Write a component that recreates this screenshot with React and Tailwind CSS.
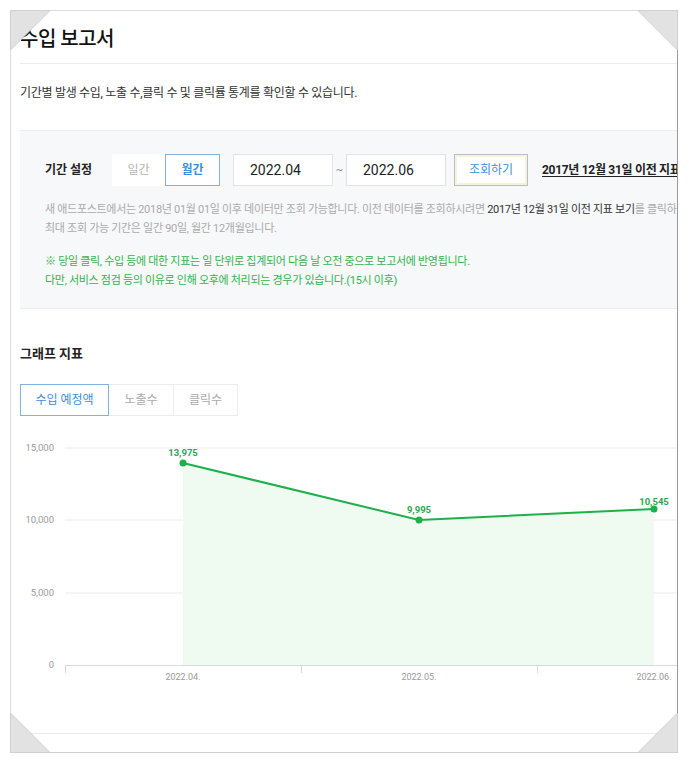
import React from "react";

const FONT = { fontFamily: "Roboto, 'Noto Sans CJK KR', sans-serif" };

function Corner({ className, points }) {
  return (
    <svg className={`absolute w-[41px] h-[41px] ${className}`} viewBox="0 0 41 41">
      <polygon points={points} fill="#e2e2e2" stroke="#cfcfcf" strokeWidth="1" />
    </svg>
  );
}

function Chart() {
  const pts = [
    { x: 163, y: 33, v: "13,975", ly: 26 },
    { x: 399, y: 90, v: "9,995", ly: 83 },
    { x: 634, y: 79, v: "10,545", ly: 75 },
  ];
  const grid = [
    { y: 18, t: "15,000" },
    { y: 90, t: "10,000" },
    { y: 163, t: "5,000" },
  ];
  const line = pts.map((p) => `${p.x},${p.y}`).join(" ");
  return (
    <svg width="680" height="260" className="block" style={FONT}>
      {grid.map((g) => (
        <g key={g.t}>
          <line x1="45" x2="680" y1={g.y} y2={g.y} stroke="#ececec" />
          <text x="34" y={g.y + 3} textAnchor="end" fontSize="9.5" fill="#9a9a9a">
            {g.t}
          </text>
        </g>
      ))}
      <text x="34" y="238" textAnchor="end" fontSize="9.5" fill="#9a9a9a">0</text>
      <polygon points={`${line} 634,235 163,235`} fill="#effaf0" />
      <line x1="45" x2="680" y1="235.5" y2="235.5" stroke="#d5dbe3" />
      {[45, 281, 517].map((x) => (
        <line key={x} x1={x + 0.5} x2={x + 0.5} y1="235" y2="243" stroke="#d5dbe3" />
      ))}
      <polyline points={line} fill="none" stroke="#1eb04a" strokeWidth="2" />
      {pts.map((p) => (
        <g key={p.v}>
          <circle cx={p.x} cy={p.y} r="3.5" fill="#1eb04a" />
          <text x={p.x} y={p.ly} textAnchor="middle" fontSize="9.5" fontWeight="700" fill="#2aa84f">
            {p.v}
          </text>
        </g>
      ))}
      {[
        { x: 163, t: "2022.04." },
        { x: 399, t: "2022.05." },
        { x: 634, t: "2022.06." },
      ].map((l) => (
        <text key={l.t} x={l.x} y="250" textAnchor="middle" fontSize="9" fill="#9a9a9a">
          {l.t}
        </text>
      ))}
    </svg>
  );
}

export default function App() {
  return (
    <div className="relative w-[689px] h-[765px] bg-white" style={FONT}>
      <div className="absolute left-[10px] top-[10px] w-[668px] h-[743px] border border-[#dcdcdc] border-r-[#9a9a9a] border-b-[#cfcfcf] overflow-hidden pl-[9px]">
        <div className="w-[900px]">
          <h1 className="pt-[14px] text-[20px] leading-[28px] font-medium text-[#111] tracking-[-0.5px]">
            수입 보고서
          </h1>
          <div className="mt-[10px] border-b border-[#ececec]" />
          <p className="mt-[20px] text-[12px] leading-[18px] text-[#333] tracking-[-0.3px]">
            기간별 발생 수입, 노출 수,클릭 수 및 클릭률 통계를 확인할 수 있습니다.
          </p>
          <div className="mt-[28px] border-t border-b border-[#ebedf0] bg-[#f7f8fa] pt-[23px] pb-[18px] pl-[25px]">
            <div className="flex items-center h-[32px]">
              <div className="w-[67px] text-[12px] font-bold text-[#222]">기간 설정</div>
              <div className="flex h-[32px]">
                <div className="w-[53px] bg-white flex items-center justify-center text-[12px] text-[#b5b5b5]">
                  일간
                </div>
                <div className="w-[55px] bg-white border border-[#7eb3de] flex items-center justify-center text-[12px] font-bold text-[#3c8fd6]">
                  월간
                </div>
              </div>
              <div className="ml-[13px] w-[100px] h-[32px] bg-white border border-[#e3e3e3] flex items-center pl-[16px] text-[14px] text-[#222]">
                2022.04
              </div>
              <div className="w-[13px] text-center text-[11px] text-[#888]">~</div>
              <div className="w-[100px] h-[32px] bg-white border border-[#e3e3e3] flex items-center pl-[16px] text-[14px] text-[#222]">
                2022.06
              </div>
              <button className="ml-[8px] w-[74px] h-[32px] bg-white border border-[#b4bec8] shadow-[inset_0_0_0_2px_#f6f2dc] text-[12px] text-[#3d8fd6]">
                조회하기
              </button>
              <a className="ml-[14px] text-[12px] font-bold text-[#222] underline underline-offset-2 tracking-[-0.3px]">
                2017년 12월 31일 이전 지표 보기
              </a>
            </div>
            <div className="mt-[14px] text-[11px] leading-[19px] text-[#aaa] tracking-[-0.3px]">
              <p>
                새 애드포스트에서는 2018년 01월 01일 이후 데이터만 조회 가능합니다. 이전 데이터를 조회하시려면{" "}
                <span className="text-[#333]">2017년 12월 31일 이전 지표 보기</span>를 클릭하세요.
              </p>
              <p>최대 조회 가능 기간은 일간 90일, 월간 12개월입니다.</p>
            </div>
            <div className="mt-[14px] text-[11px] leading-[19px] text-[#34b34f] tracking-[-0.3px]">
              <p>※ 당일 클릭, 수입 등에 대한 지표는 일 단위로 집계되어 다음 날 오전 중으로 보고서에 반영됩니다.</p>
              <p>다만, 서비스 점검 등의 이유로 인해 오후에 처리되는 경우가 있습니다.(15시 이후)</p>
            </div>
          </div>
          <h2 className="mt-[35px] text-[13px] leading-[20px] font-bold text-[#222]">그래프 지표</h2>
          <div className="mt-[20px] flex h-[32px]">
            <div className="w-[89px] border border-[#7eb3de] flex items-center justify-center text-[12px] text-[#3c8fd6]">
              수입 예정액
            </div>
            <div className="w-[65px] border-t border-b border-r border-[#ececec] flex items-center justify-center text-[12px] text-[#aaa]">
              노출수
            </div>
            <div className="w-[64px] border-t border-b border-r border-[#ececec] flex items-center justify-center text-[12px] text-[#aaa]">
              클릭수
            </div>
          </div>
          <div className="mt-[14px]">
            <Chart />
          </div>
          <div className="mt-[43px] border-b border-[#ececec]" />
        </div>
      </div>
      <Corner className="left-[10px] top-[10px]" points="0.5,0.5 40,0.5 0.5,40" />
      <Corner className="left-[637px] top-[10px]" points="1,0.5 40.5,0.5 40.5,40" />
      <Corner className="left-[10px] top-[712px]" points="0.5,1 0.5,40.5 40,40.5" />
      <Corner className="left-[637px] top-[712px]" points="40.5,1 40.5,40.5 1,40.5" />
    </div>
  );
}
